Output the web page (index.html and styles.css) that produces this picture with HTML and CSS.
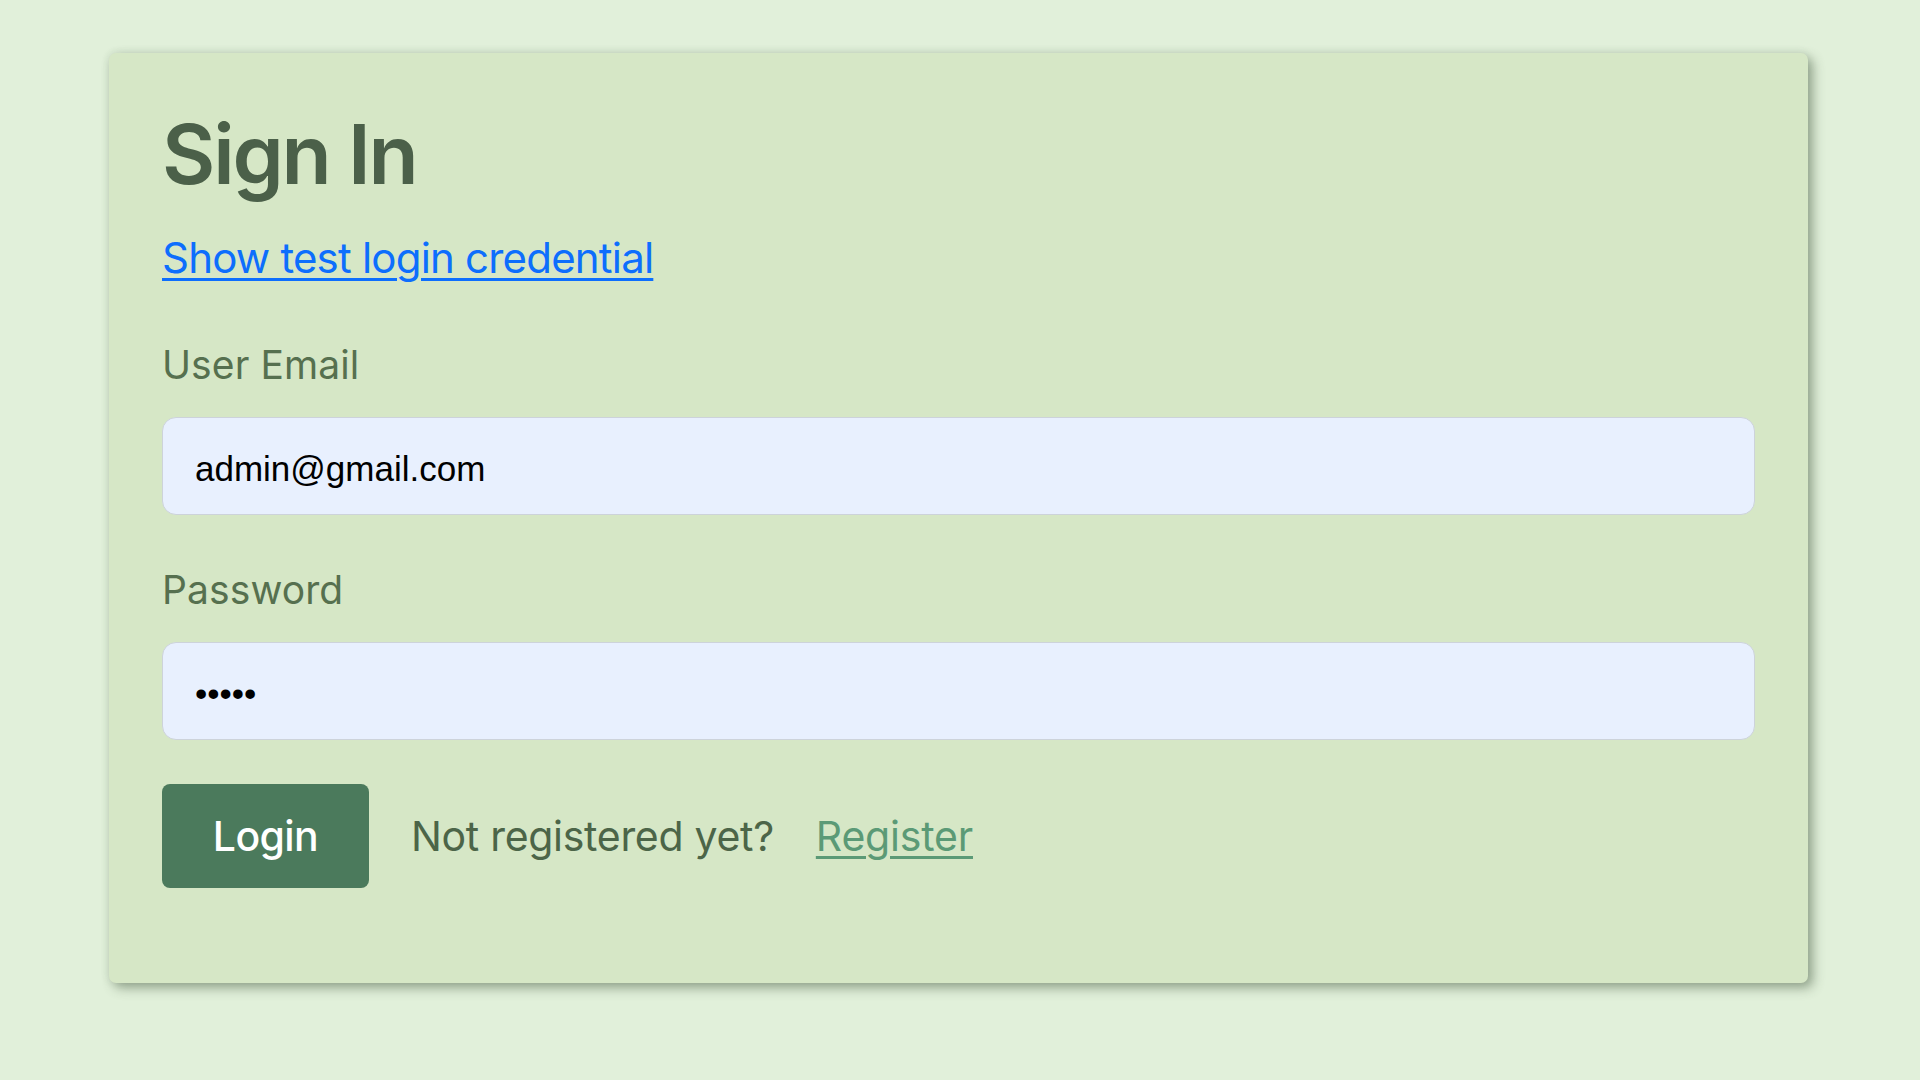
FILE: index.html
```html
<!DOCTYPE html>
<html lang="en">
<head>
<meta charset="utf-8">
<title>Sign In</title>
<link rel="stylesheet" href="styles.css">
</head>
<body>
<main class="page">
  <section class="card">
    <h1 class="title">Sign In</h1>
    <a class="cred-link" href="#">Show test login credential</a>
    <form class="form">
      <label class="label" for="email">User Email</label>
      <input class="field" id="email" type="email" value="admin@gmail.com">
      <label class="label label-pass" for="password">Password</label>
      <input class="field" id="password" type="password" value="admin">
      <div class="actions">
        <button class="btn" type="button">Login</button>
        <span class="hint">Not registered yet?</span>
        <a class="register" href="#">Register</a>
      </div>
    </form>
  </section>
</main>
</body>
</html>
```
FILE: styles.css
```css
* { box-sizing: border-box; }
html, body { margin: 0; padding: 0; }
body {
  background: #e1f0da;
  font-family: Inter, "Noto Sans", sans-serif;
  min-height: 1080px;
}
.page {
  padding-top: 53px;
}
.card {
  width: 1699px;
  margin-left: 109px;
  background: #d6e7c6;
  border-radius: 7px;
  box-shadow: 5px 5px 12px rgba(60, 80, 55, 0.45), 0 0 8px rgba(60, 80, 55, 0.12);
  padding: 53px 53px 95px 53px;
}
.title {
  margin: 0;
  font-size: 82px;
  line-height: 98px;
  font-weight: 600;
  color: #4b6049;
  letter-spacing: -2.2px;
}
.cred-link {
  display: inline-block;
  align-self: flex-start;
  margin-top: 29px;
  font-size: 42px;
  line-height: 50px;
  color: #0d6efd;
  letter-spacing: -0.8px;
  text-decoration: underline;
  text-decoration-thickness: 3px;
  text-underline-offset: 5px;
}
.form {
  display: flex;
  flex-direction: column;
  margin-top: 58px;
}
.label {
  font-size: 39px;
  line-height: 47px;
  color: #56704f;
  letter-spacing: 0.1px;
}
.label-pass {
  margin-top: 51px;
}
.field {
  margin-top: 29px;
  height: 98px;
  width: 100%;
  border: 1px solid #cdd3da;
  border-radius: 14px;
  background: #e8f0fe;
  padding: 5px 32px 0 32px;
  font-family: "Liberation Sans", Arial, sans-serif;
  font-size: 35px;
  color: #000;
  outline: none;
}
.actions {
  display: flex;
  align-items: center;
  margin-top: 44px;
}
.btn {
  height: 104px;
  width: 207px;
  border: none;
  border-radius: 8px;
  background: #4b7a5c;
  color: #fff;
  font-family: Inter, "Noto Sans", sans-serif;
  font-size: 41px;
  font-weight: 500;
  letter-spacing: -0.6px;
  padding: 0;
}
.hint {
  margin-left: 42px;
  font-size: 41px;
  color: #4c6548;
  letter-spacing: -0.3px;
}
.register {
  margin-left: 42px;
  font-size: 41px;
  color: #5b9a76;
  letter-spacing: -0.2px;
  text-decoration: underline;
  text-decoration-thickness: 3px;
  text-underline-offset: 5px;
}
```
